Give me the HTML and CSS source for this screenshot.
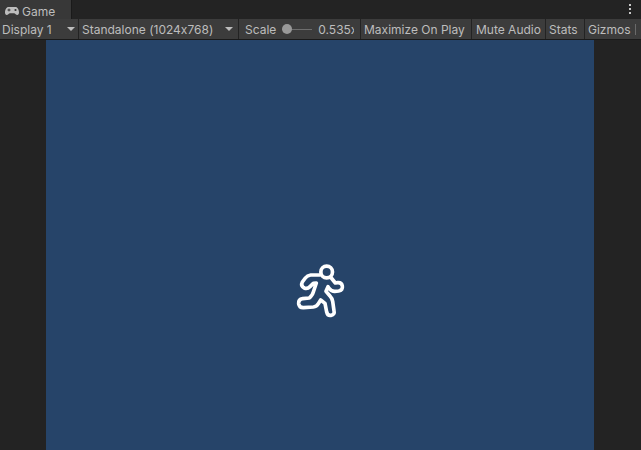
FILE: index.html
```html
<!DOCTYPE html>
<html lang="en">
<head>
<meta charset="utf-8">
<title>Game</title>
<link rel="stylesheet" href="styles.css">
</head>
<body>
<div class="tabbar">
  <div class="tab">
    <svg class="pad" width="14" height="8" viewBox="0 0 14 8"><path d="M3.500 0h7C12.500 0 14 2.500 14 5.500 14 7 13.300 8 12.300 8c-1.300 0-2-1.800-3.300-1.800H5C3.700 6.200 3 8 1.700 8 .7 8 0 7 0 5.500 0 2.500 1.500 0 3.500 0z" fill="#bdbdbd"/><path d="M2.500 3h3M4 1.600v2.800" stroke="#333" stroke-width="1"/><circle cx="10.500" cy="3" r="1.100" fill="#333"/></svg>
    <span>Game</span>
  </div>
  <div class="kebab"><i></i><i></i><i></i></div>
</div>
<div class="toolbar">
  <div class="item display"><span>Display 1</span><b class="arrow"></b></div>
  <div class="item standalone"><span>Standalone (1024x768)</span><b class="arrow"></b></div>
  <div class="item scale">
    <span>Scale</span>
    <div class="slider"><i class="thumb"></i></div>
    <span class="value">0.535x</span>
  </div>
  <div class="item maximize"><span>Maximize On Play</span></div>
  <div class="item mute"><span>Mute Audio</span></div>
  <div class="item stats"><span>Stats</span></div>
  <div class="item gizmos"><span>Gizmos</span><i class="divider"></i></div>
</div>
<div class="viewport">
  <div class="screen">
    <svg class="runner" width="60" height="64" viewBox="0 0 180 192" fill="none" stroke="#fff" stroke-width="11" stroke-linecap="round" stroke-linejoin="round">
      <circle cx="110" cy="42" r="17.500"/>
      <path d="M90 51 L62 51 Q52 52 46 60 L37 72 Q31 84 43 90 Q52 94 60 86 L70 76 L79 75 L70 102 Q68 110 62 116 L58 120 L38 122 Q25 124 26 137 Q28 150 41 149 L70 147 Q80 146 85 137 L92 126 L105 136 L110 162 Q113 174 123 172 Q135 170 132 158 L128 130 Q126 120 120 114 L108 100 L114 86 L118 92 Q124 100 134 100 L146 99 Q159 97 157 84 Q155 73 143 74 L136 75 L124 60"/>
    </svg>
  </div>
</div>
</body>
</html>
```
FILE: styles.css
```css
* { box-sizing: border-box; }
html, body { margin: 0; height: 100%; }
body {
  width: 641px;
  height: 450px;
  overflow: hidden;
  background: #232323;
  font-family: Inter, "Open Sans", sans-serif;
  font-feature-settings: "calt" 0;
  font-size: 12px;
  color: #bdbdbd;
  display: flex;
  flex-direction: column;
}
.tabbar {
  height: 19px;
  background: #232323;
  display: flex;
  justify-content: space-between;
}
.tab {
  width: 72px;
  height: 19px;
  background: #383838;
  border-right: 1px solid #1a1a1a;
  display: flex;
  align-items: center;
  gap: 3px;
  padding: 3px 0 0 5px;
  font-size: 12px;
}
.kebab {
  width: 2px;
  margin: 4px 10px 0 0;
  display: flex;
  flex-direction: column;
  gap: 2px;
}
.kebab i { width: 2px; height: 2px; background: #c8c8c8; display: block; }
.toolbar {
  height: 21px;
  background: #3c3c3c;
  border-bottom: 1px solid #1a1a1a;
  display: flex;
  white-space: nowrap;
}
.item {
  display: flex;
  align-items: center;
  border-right: 1px solid #232323;
  overflow: hidden;
  padding-left: 3px;
  flex: none;
}
.display { width: 79px; padding-left: 2px; justify-content: space-between; padding-right: 3px; }
.standalone { width: 160px; justify-content: space-between; padding-right: 5px; }
.scale { width: 122px; padding-left: 6px; }
.maximize { width: 111px; }
.mute { width: 74px; padding-left: 4px; }
.stats { width: 39px; padding-left: 3px; }
.gizmos { flex: 1; padding-left: 3px; border-right: 0; }
.divider {
  width: 1px;
  height: 11px;
  margin-left: 4px;
  background: #6a6a6a;
  flex: none;
}
.arrow {
  width: 0;
  height: 0;
  border-left: 4px solid transparent;
  border-right: 4px solid transparent;
  border-top: 4px solid #bdbdbd;
}
.slider {
  width: 30px;
  height: 1px;
  margin: 0 6px 0 6px;
  background: #6e6e6e;
  position: relative;
  flex: none;
}
.thumb {
  position: absolute;
  left: 0;
  top: -5px;
  width: 10px;
  height: 10px;
  border-radius: 50%;
  background: #999;
}
.value { flex: none; width: 36px; overflow: hidden; }
.viewport {
  flex: 1;
  display: flex;
  justify-content: center;
  padding-right: 1px;
}
.screen {
  width: 548px;
  background: #264469;
  display: flex;
  justify-content: center;
  padding-top: 218px;
}
.runner { flex: none; }
```
